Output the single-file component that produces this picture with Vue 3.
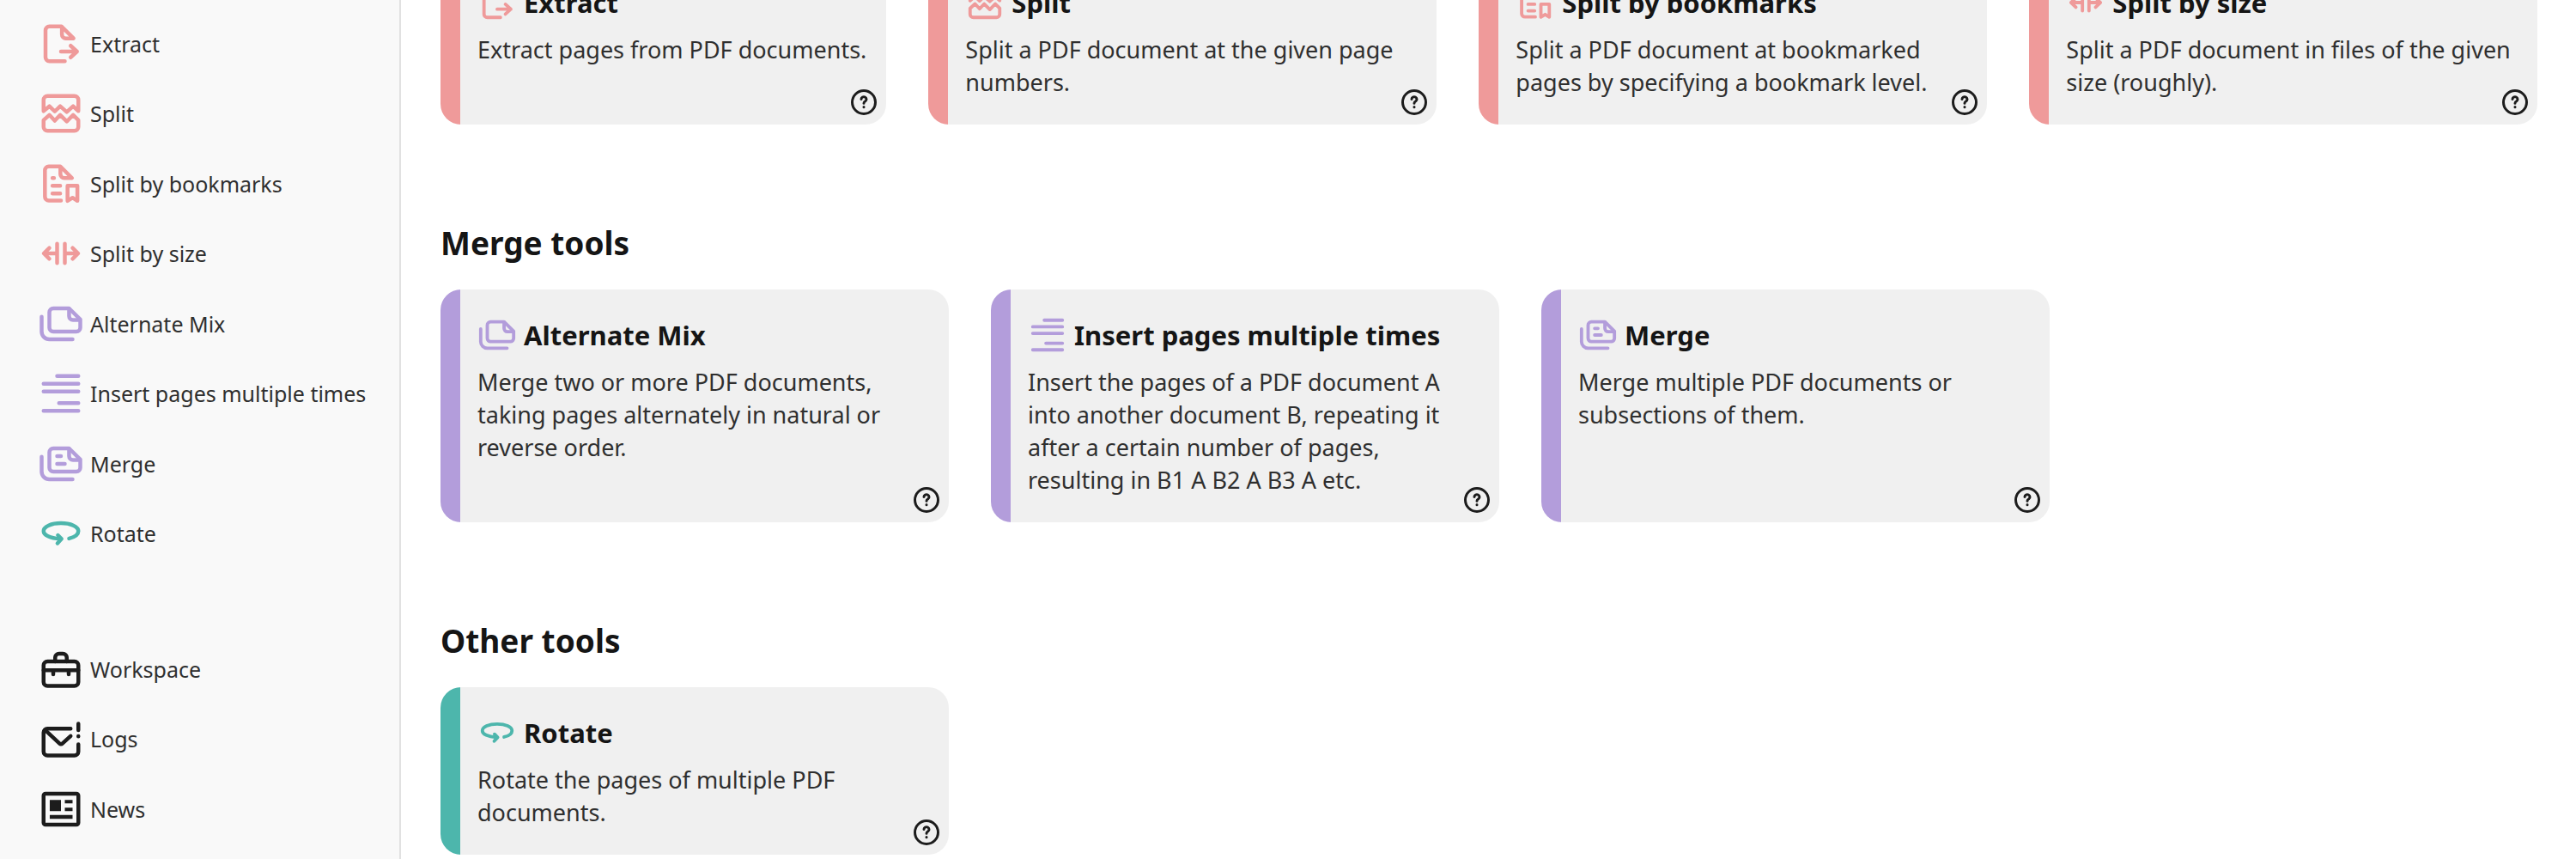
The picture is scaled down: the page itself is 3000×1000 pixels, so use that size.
<script setup>
const icons = {
  extract: [
    'M14 21H6a2 2 0 0 1-2-2V5a2 2 0 0 1 2-2h6.3l6.2 6.2H14.5a2 2 0 0 1-2-2V3.2',
    'M12 16h8.300M17 13l3.300 3-3.300 3',
  ],
  split: [
    'M3 10.800V5a2 2 0 0 1 2-2h14a2 2 0 0 1 2 2v5.800l-2.700-2.500-3.300 3-3.400-3-2.800 2.700-2.800-2.700z',
    'M3 15.500V19a2 2 0 0 0 2 2h14a2 2 0 0 0 2-2v-3.500l-2.700-2.700-3.300 3.400-3.400-3.400-2.800 3-2.800-3z',
  ],
  bookmarks: [
    'M12 20.700H5.700a2 2 0 0 1-2-2V5a2 2 0 0 1 2-2h6l6 6H13.700a2 2 0 0 1-2-2V3.200',
    'M7.600 9h.8M7.600 13h4M7.600 17h4',
    'M15.400 13h5.100v7.800l-2.500-1.600-2.600 1.600z',
  ],
  size: ['M10 7v10M14 7v10M10 12H3.500M6 9.200L3.100 12 6 14.800M14 12h6.500M18 9.200l2.900 2.800-2.900 2.800'],
  mix: [
    'M8 4h8.200l5.800 5.700V14a2 2 0 0 1-2 2H8a2 2 0 0 1-2-2V6a2 2 0 0 1 2-2z',
    'M16.200 4.200V8a2 2 0 0 0 2 2h3.500',
    'M2 8.300V16a4 4 0 0 0 4 4h12',
  ],
  insert: ['M10 3h11M3 7h18M3 11h18M11 17h10M3 21h18'],
  merge: [
    'M8 4h8.200l5.800 5.700V14a2 2 0 0 1-2 2H8a2 2 0 0 1-2-2V6a2 2 0 0 1 2-2z',
    'M16.200 4.200V8a2 2 0 0 0 2 2h3.500',
    'M2 8.300V16a4 4 0 0 0 4 4h12',
    'M10 8h2M10 12h4',
  ],
  rotate: [
    'M16.200 14.600c2.900-.7 4.800-2.100 4.800-3.800 0-2.300-4-4.100-9-4.100s-9 1.800-9 4.100c0 2.100 3.500 3.700 8.400 4',
    'M10.400 12.900l1.900 1.900-2.100 2.300',
  ],
  workspace: [
    'M5 8h14a2 2 0 0 1 2 2v8.700a2 2 0 0 1-2 2H5a2 2 0 0 1-2-2V10a2 2 0 0 1 2-2z',
    'M3 12.500h18M8 12.500v2.200M16 12.500v2.200',
    'M9 8V6a2 2 0 0 1 2-2h2a2 2 0 0 1 2 2v2',
  ],
  logs: [
    'M17 6.800H5a2 2 0 0 0-2 2v9.900a2 2 0 0 0 2 2h14a2 2 0 0 0 2-2V14.900',
    'M3.800 7.500l7.500 7a1 1 0 0 0 1.400 0l4.300-3.900',
    'M21 4.200v3.400M21 10.700v.1',
  ],
}

const tools = [
  { icon: 'extract', name: 'Extract', tone: 'rose' },
  { icon: 'split', name: 'Split', tone: 'rose' },
  { icon: 'bookmarks', name: 'Split by bookmarks', tone: 'rose' },
  { icon: 'size', name: 'Split by size', tone: 'rose' },
  { icon: 'mix', name: 'Alternate Mix', tone: 'violet' },
  { icon: 'insert', name: 'Insert pages multiple times', tone: 'violet' },
  { icon: 'merge', name: 'Merge', tone: 'violet' },
  { icon: 'rotate', name: 'Rotate', tone: 'teal' },
]

const pages = [
  { icon: 'workspace', name: 'Workspace', tone: 'ink' },
  { icon: 'logs', name: 'Logs', tone: 'ink' },
  { icon: 'news', name: 'News', tone: 'ink' },
]

const sections = [
  {
    title: '',
    tone: 'rose',
    cards: [
      { icon: 'extract', name: 'Extract', text: 'Extract pages from PDF documents.' },
      { icon: 'split', name: 'Split', text: 'Split a PDF document at the given page numbers.' },
      { icon: 'bookmarks', name: 'Split by bookmarks', text: 'Split a PDF document at bookmarked pages by specifying a bookmark level.' },
      { icon: 'size', name: 'Split by size', text: 'Split a PDF document in files of the given size (roughly).' },
    ],
  },
  {
    title: 'Merge tools',
    tone: 'violet',
    cards: [
      { icon: 'mix', name: 'Alternate Mix', text: 'Merge two or more PDF documents, taking pages alternately in natural or reverse order.' },
      { icon: 'insert', name: 'Insert pages multiple times', text: 'Insert the pages of a PDF document A into another document B, repeating it after a certain number of pages, resulting in B1 A B2 A B3 A etc.' },
      { icon: 'merge', name: 'Merge', text: 'Merge multiple PDF documents or subsections of them.' },
    ],
  },
  {
    title: 'Other tools',
    tone: 'teal',
    cards: [
      { icon: 'rotate', name: 'Rotate', text: 'Rotate the pages of multiple PDF documents.' },
    ],
  },
]
</script>

<template>
  <div class="app">
    <nav class="sidebar">
      <ul v-for="(group, g) in [tools, pages]" :key="g" class="menu">
        <li v-for="item in group" :key="item.name">
          <a href="#" class="menu-link">
            <svg class="icon" :class="item.tone" viewBox="0 0 24 24" aria-hidden="true">
              <template v-if="item.icon === 'news'">
                <rect x="3" y="4" width="18" height="16" rx="1" />
                <path class="solid" d="M6.200 7.200H12V13H6.200zM14 7.200h4v1.800h-4zM14 11.200h4V13h-4zM6.200 15H18v2H6.200z" />
              </template>
              <path v-for="d in icons[item.icon]" v-else :key="d" :d="d" />
            </svg>
            <span>{{ item.name }}</span>
          </a>
        </li>
      </ul>
    </nav>

    <main class="content">
      <section v-for="section in sections" :key="section.tone" class="section">
        <h2 v-if="section.title">{{ section.title }}</h2>
        <div class="cards">
          <article v-for="card in section.cards" :key="card.name" class="card" :class="section.tone">
            <h3>
              <svg class="icon" :class="section.tone" viewBox="0 0 24 24" aria-hidden="true">
                <path v-for="d in icons[card.icon]" :key="d" :d="d" />
              </svg>
              <span>{{ card.name }}</span>
            </h3>
            <p>{{ card.text }}</p>
            <button type="button" class="help" :aria-label="card.name">
              <svg class="icon ink" viewBox="0 0 24 24" aria-hidden="true">
                <circle cx="12" cy="12" r="9" />
                <path d="M10 9.600a2 1.900 0 1 1 3.200 1.600c-.8.500-1.200.8-1.200 1.600M12 15.700v.1" />
              </svg>
            </button>
          </article>
        </div>
      </section>
    </main>
  </div>
</template>

<style>
body {
  background: #fff;
}
</style>

<style scoped>
.app {
  display: flex;
  height: 100vh;
  overflow: hidden;
  font-family: "Noto Sans", sans-serif;
  color: #2f2f2f;
}

.sidebar {
  flex: none;
  width: 465px;
  padding-top: 10px;
  border-right: 2px solid #e1e1e1;
  background: #f9f9f9;
}

.menu {
  display: grid;
  grid-auto-rows: 1fr;
  height: 652px;
  margin: 0 0 76px;
  padding: 0;
  list-style: none;
}

.menu + .menu {
  height: 245px;
  margin-bottom: 0;
}

.menu-link {
  display: flex;
  align-items: center;
  gap: 7px;
  height: 100%;
  padding-left: 44px;
  font-size: 25px;
  line-height: 34px;
  color: inherit;
  text-decoration: none;
}

.icon {
  flex: none;
  width: 54px;
  height: 54px;
  fill: none;
  stroke: currentColor;
  stroke-width: 2;
  stroke-linecap: round;
  stroke-linejoin: round;
}

.icon .solid {
  fill: currentColor;
  stroke: none;
}

.rose {
  color: #ef9a9a;
}

.violet {
  color: #b39ddb;
}

.teal {
  color: #4db6ac;
}

.ink {
  color: #1c1c1c;
}

.content {
  flex: 1;
  min-width: 0;
  margin-top: -50px;
  padding: 0 44px 0 46px;
}

.section + .section {
  margin-top: 113px;
}

h2 {
  margin: 0 0 29px;
  font-size: 37px;
  font-weight: 700;
  line-height: 50px;
  color: #151515;
}

.cards {
  display: flex;
  flex-wrap: wrap;
  gap: 49px;
}

.card {
  position: relative;
  box-sizing: border-box;
  max-width: 592px;
  padding: 30px 23px 30px 43px;
  border-radius: 24px;
  background: linear-gradient(to right, currentColor 23px, #f0f0f0 23px);
}

h3 {
  display: flex;
  align-items: center;
  gap: 8px;
  margin: 0 0 13px;
  font-size: 31px;
  font-weight: 700;
  line-height: 46px;
}

h3 span {
  color: #151515;
}

h3 .icon {
  width: 46px;
  height: 46px;
}

.card p {
  margin: 0;
  font-size: 27px;
  line-height: 38px;
  color: #2f2f2f;
}

.help {
  position: absolute;
  right: 8px;
  bottom: 8px;
  display: flex;
  padding: 0;
  border: 0;
  background: none;
  cursor: pointer;
}

.help .icon {
  width: 36px;
  height: 36px;
}
</style>
